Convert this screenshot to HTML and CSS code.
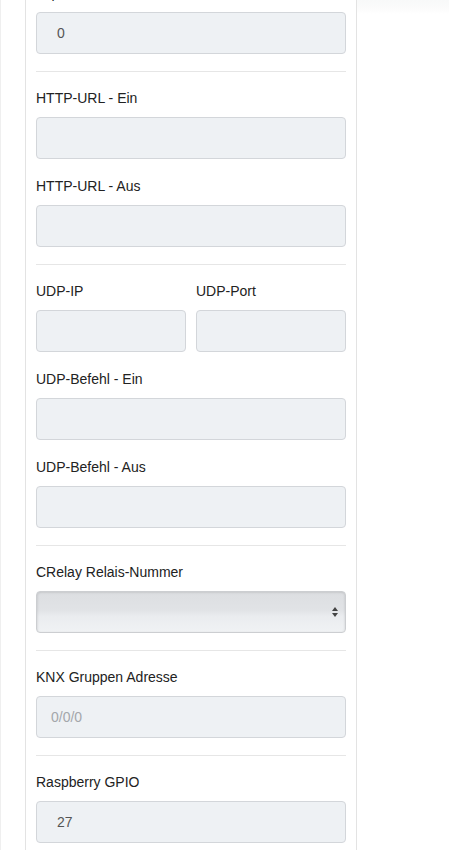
FILE: index.html
```html
<!DOCTYPE html>
<html lang="de">
<head>
<meta charset="utf-8">
<title>Einstellungen</title>
<link rel="stylesheet" href="styles.css">
</head>
<body>
<div class="page">
  <div class="gutter"></div>
  <main class="panel">
    <div class="inner">
      <div class="field">
        <label class="label">Impuls-Dauer</label>
        <input class="input num" type="text" value="0">
      </div>
      <hr class="divider">
      <div class="field">
        <label class="label">HTTP-URL - Ein</label>
        <input class="input" type="text">
      </div>
      <div class="field">
        <label class="label">HTTP-URL - Aus</label>
        <input class="input" type="text">
      </div>
      <hr class="divider">
      <div class="row">
        <div class="field">
          <label class="label">UDP-IP</label>
          <input class="input" type="text">
        </div>
        <div class="field">
          <label class="label">UDP-Port</label>
          <input class="input" type="text">
        </div>
      </div>
      <div class="field">
        <label class="label">UDP-Befehl - Ein</label>
        <input class="input" type="text">
      </div>
      <div class="field">
        <label class="label">UDP-Befehl - Aus</label>
        <input class="input" type="text">
      </div>
      <hr class="divider">
      <div class="field">
        <label class="label">CRelay Relais-Nummer</label>
        <div class="select">
          <svg class="arrows" width="8" height="12" viewBox="0 0 8 12"><path d="M4 1 L7 5 L1 5 Z" fill="#444"/><path d="M4 11 L7 7 L1 7 Z" fill="#444"/></svg>
        </div>
      </div>
      <hr class="divider">
      <div class="field">
        <label class="label">KNX Gruppen Adresse</label>
        <input class="input" type="text" placeholder="0/0/0">
      </div>
      <hr class="divider">
      <div class="field">
        <label class="label">Raspberry GPIO</label>
        <input class="input num" type="text" value="27">
      </div>
    </div>
  </main>
  <div class="side"></div>
</div>
</body>
</html>
```
FILE: styles.css
```css
html, body {
  margin: 0;
  padding: 0;
  background: #fff;
  font-family: "Liberation Sans", Arial, sans-serif;
  overflow: hidden;
}
.page {
  display: flex;
  min-height: 850px;
}
.gutter {
  width: 24px;
  border-left: 1px solid #efefef;
}
.panel {
  width: 310px;
  padding: 0 10px;
  border-left: 1px solid #e3e3e3;
  border-right: 1px solid #e3e3e3;
}
.inner {
  margin-top: -17px;
}
.side {
  flex: 1;
  background: linear-gradient(#f8f9f9 0, #fbfbfb 8px, #fff 14px);
}
.field {
  display: flex;
  flex-direction: column;
  margin-bottom: 17px;
}
.label {
  font-size: 14px;
  line-height: 20px;
  color: #222;
  margin-bottom: 9px;
}
.row {
  display: flex;
  gap: 10px;
}
.row .field {
  flex: 1;
  min-width: 0;
}
.input {
  box-sizing: border-box;
  width: 100%;
  height: 42px;
  margin: 0;
  padding: 0 14px;
  border: 1px solid #d3d6da;
  border-radius: 4px;
  background: #eef1f4;
  font-family: "Liberation Sans", Arial, sans-serif;
  font-size: 14px;
  color: #555;
  outline: none;
}
.input.num {
  padding-left: 20px;
}
.input::placeholder {
  color: #a4a7ab;
}
.select {
  box-sizing: border-box;
  height: 42px;
  border: 1px solid #ccced1;
  border-radius: 4px;
  background: linear-gradient(#dcdee1 0, #e1e3e6 45%, #eaecef 60%, #f0f2f4 100%);
  box-shadow: inset 1px 1px 2px rgba(0,0,0,0.08), inset -1px 0 2px rgba(0,0,0,0.06);
  display: flex;
  align-items: center;
  justify-content: flex-end;
  padding-right: 6px;
}
.divider {
  border: 0;
  border-top: 1px solid #e6e6e6;
  margin: 0 0 16px;
  height: 0;
}
```
